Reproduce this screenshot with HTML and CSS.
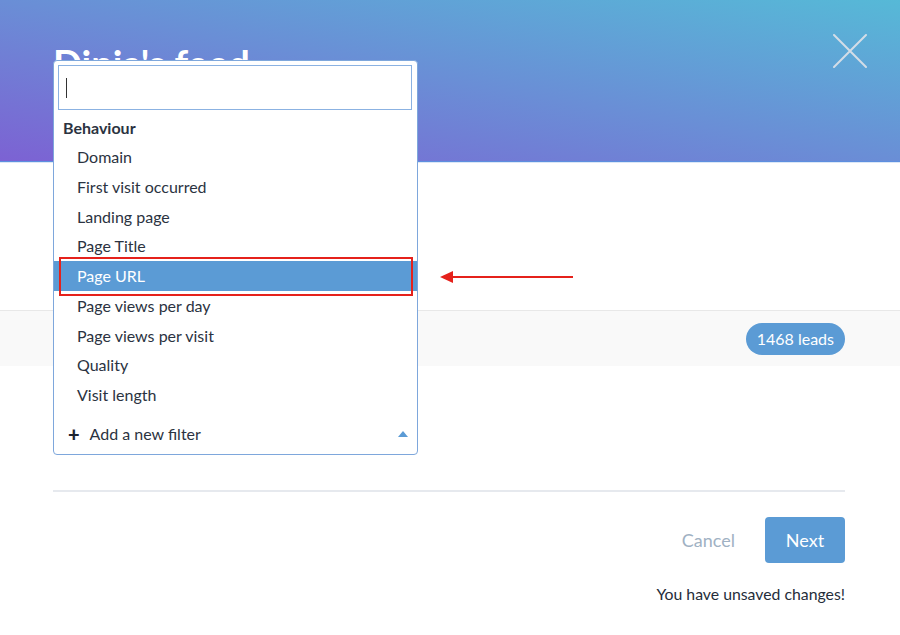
FILE: index.html
```html
<!DOCTYPE html>
<html lang="en">
<head>
  <meta charset="UTF-8" />
  <meta name="viewport" content="width=device-width, initial-scale=1" />
  <title>Dinia's feed</title>
  <link rel="stylesheet" href="styles.css">
</head>
<body>

  <!-- Cabeçalho -->
  <div class="cabecalho">
    <div class="titulo">Dinia's feed</div>
    <svg class="fechar" width="34" height="34" viewBox="0 0 34 34">
      <path d="M1 1 L33 33 M33 1 L1 33" stroke="#d3dde7" stroke-width="2" fill="none" stroke-linecap="round" />
    </svg>
  </div>

  <div class="campos"></div>

  <div class="faixa">
    <span class="leads">1468 leads</span>
  </div>

  <div class="rodape">
    <div class="linha"></div>
    <div class="acoes">
      <span class="cancelar">Cancel</span>
      <button class="proximo">Next</button>
    </div>
    <div class="aviso">You have unsaved changes!</div>
  </div>

  <!-- Dropdown de filtros -->
  <div class="dropdown">
    <div class="busca"><span class="cursor"></span></div>
    <div class="grupo">Behaviour</div>
    <div class="item">Domain</div>
    <div class="item">First visit occurred</div>
    <div class="item">Landing page</div>
    <div class="item">Page Title</div>
    <div class="item selecionado">Page URL</div>
    <div class="item">Page views per day</div>
    <div class="item">Page views per visit</div>
    <div class="item">Quality</div>
    <div class="item">Visit length</div>
    <div class="novo-filtro">
      <span class="mais">+</span>
      <span>Add a new filter</span>
      <span class="seta-cima"></span>
    </div>
    <div class="destaque"></div>
  </div>

  <!-- Seta vermelha -->
  <div class="seta">
    <span class="ponta"></span>
    <span class="haste"></span>
  </div>

</body>
</html>
```

FILE: styles.css
```css
body {
  margin: 0;
  padding: 0;
  background: white;
  font-family: Lato, 'Open Sans', sans-serif;
  color: #2b3341;
}

.cabecalho {
  position: relative;
  height: 162px;
  padding: 43px 53px 0;
  box-sizing: border-box;
  background: linear-gradient(to top right, #7c62d3 0%, #6a8ed6 50%, #56b9d7 100%);
  border-bottom: 1px solid #5d8fe0;
  box-shadow: 0 1px 0 #dce7f6;
}

.titulo {
  color: white;
  font-size: 38px;
  font-weight: bold;
  line-height: 40px;
}

.fechar {
  position: absolute;
  top: 34px;
  right: 33px;
}

.campos {
  height: 148px;
}

.faixa {
  display: flex;
  justify-content: flex-end;
  align-items: center;
  height: 55px;
  padding: 0 55px;
  background: #f9f9f9;
  border-top: 1px solid #e8e8e8;
}

.leads {
  background: #5b9bd5;
  color: white;
  font-size: 16px;
  line-height: 32px;
  padding: 0 11px;
  border-radius: 16px;
}

.rodape {
  padding: 0 55px 0 53px;
}

.linha {
  margin-top: 124px;
  height: 2px;
  background: #e6e9ee;
}

.acoes {
  display: flex;
  justify-content: flex-end;
  align-items: center;
  gap: 30px;
  margin-top: 25px;
}

.cancelar {
  font-size: 18px;
  color: #a0b1c3;
}

.proximo {
  font-family: Lato, sans-serif;
  font-size: 18px;
  color: white;
  background: #5b9bd5;
  border: none;
  border-radius: 4px;
  width: 80px;
  height: 46px;
  padding: 0;
}

.aviso {
  text-align: right;
  font-size: 15.8px;
  line-height: 20px;
  margin-top: 21px;
  color: #252d3a;
}

/* dropdown */
.dropdown {
  position: absolute;
  top: 60px;
  left: 53px;
  width: 363px;
  background: white;
  border: 1px solid #7ea7dc;
  border-radius: 4px;
}

.busca {
  margin: 4px 5px 4px 4px;
  height: 43px;
  border: 1px solid #8bb2e2;
  display: flex;
  align-items: center;
  padding-left: 7px;
}

.cursor {
  width: 1px;
  height: 20px;
  background: #333;
}

.grupo {
  font-size: 16px;
  font-weight: bold;
  line-height: 28px;
  padding-left: 9px;
}

.item {
  font-size: 16px;
  line-height: 29.75px;
  padding-left: 23px;
}

.selecionado {
  background: #5b9bd5;
  color: white;
}

.novo-filtro {
  display: flex;
  align-items: center;
  font-size: 16px;
  line-height: 28px;
  padding: 10px 9px 6px 14px;
}

.mais {
  font-weight: 900;
  font-size: 20px;
  color: #1d2430;
  margin-right: 10px;
}

.seta-cima {
  margin-left: auto;
  width: 0;
  height: 0;
  border-left: 5px solid transparent;
  border-right: 5px solid transparent;
  border-bottom: 6px solid #5b9bd5;
}

.destaque {
  position: absolute;
  left: 5px;
  top: 196px;
  width: 350px;
  height: 35px;
  border: 2px solid #e5211b;
}

.seta {
  position: absolute;
  top: 271px;
  left: 440px;
  display: flex;
  align-items: center;
}

.ponta {
  width: 0;
  height: 0;
  border-top: 6px solid transparent;
  border-bottom: 6px solid transparent;
  border-right: 13px solid #e5211b;
}

.haste {
  width: 120px;
  height: 2px;
  background: #e5211b;
}
```
